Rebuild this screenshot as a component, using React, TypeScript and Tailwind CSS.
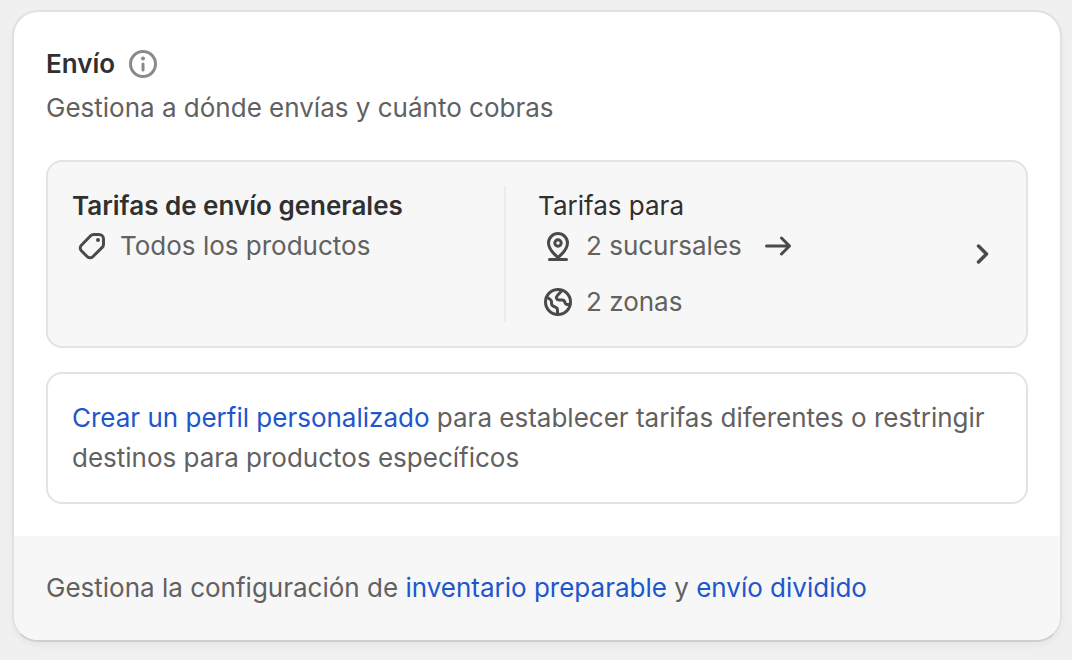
import type { ReactNode } from "react";

function Icon({ children, className = "" }: { children: ReactNode; className?: string }) {
  return (
    <svg
      viewBox="0 0 20 20"
      className={`size-10 shrink-0 ${className}`}
      fill="none"
      stroke="currentColor"
      strokeWidth="1.5"
      strokeLinecap="round"
      strokeLinejoin="round"
      aria-hidden="true"
    >
      {children}
    </svg>
  );
}

function InfoIcon() {
  return (
    <Icon>
      <circle cx="10" cy="10" r="6.25" />
      <path d="M10 10v3" />
      <circle cx="10" cy="7.25" r="1" fill="currentColor" stroke="none" />
    </Icon>
  );
}

function TagIcon() {
  return (
    <Icon className="text-[#4a4a4a]">
      <path d="M10.9 4.25h2.6a2.25 2.25 0 0 1 2.25 2.25v2.6c0 .6-.24 1.17-.66 1.6l-4.7 4.65a1.9 1.9 0 0 1-2.7 0l-3-3a1.9 1.9 0 0 1 0-2.7l4.62-4.74c.42-.42 1-.66 1.6-.66z" />
      <circle cx="13" cy="7" r="1" fill="currentColor" stroke="none" />
    </Icon>
  );
}

function PinIcon() {
  return (
    <Icon className="text-[#4a4a4a]">
      <path d="M10 15.75c-1.6-1.3-4.75-3.9-4.75-7.2a4.75 4.75 0 0 1 9.5 0c0 3.3-3.15 5.9-4.75 7.2z" />
      <circle cx="10" cy="8.5" r="1.6" />
      <path d="M5.75 16.75h8.5" />
    </Icon>
  );
}

function GlobeIcon() {
  return (
    <Icon className="text-[#4a4a4a]">
      <circle cx="10" cy="10" r="6.25" />
      <path d="M4.3 7.5l1.7 1.1c.5.3.75.8.75 1.3v.8c0 .6.35 1.1.9 1.4l1.3.6c.5.25.8.7.8 1.2v2.2" />
      <path d="M12 4.3l-2.3 2.5c-.9 1-.5 2.2.8 2.2h1.5c.7 0 1.2.4 1.4 1l.2.6c.1.4.5.65.9.65h1.4" />
    </Icon>
  );
}

function ArrowIcon() {
  return (
    <Icon>
      <path d="M4.25 10h11.5M11.75 6l4 4-4 4" />
    </Icon>
  );
}

function Link({ children }: { children: ReactNode }) {
  return (
    <a href="#" className="text-[#2056cb] hover:underline">
      {children}
    </a>
  );
}

export default function App() {
  return (
    <div className="min-h-screen bg-[#f0f0f0] pt-2.5 pr-2.5 pb-5 pl-3 font-['Inter',sans-serif] text-[26px] leading-10 text-[#616161]">
      <section className="overflow-hidden rounded-[26px] border-2 border-[#e1e1e1] border-b-[#cfcfcf] bg-white bg-clip-padding shadow-[0_4px_6px_rgba(0,0,0,0.04)]">
        <div className="p-8">
          <header className="flex flex-col gap-1">
            <div className="flex items-center gap-2">
              <h2 className="font-semibold text-[#303030]">Envío</h2>
              <button type="button" aria-label="Información sobre envío" className="text-[#8a8a8a]">
                <InfoIcon />
              </button>
            </div>
            <p>Gestiona a dónde envías y cuánto cobras</p>
          </header>

          <div className="mt-8 flex items-stretch rounded-2xl border-2 border-[#e3e3e3] bg-[#f7f7f7] p-6">
            <div className="min-w-0 flex-1">
              <h3 className="font-semibold text-[#303030]">Tarifas de envío generales</h3>
              <div className="flex items-center gap-2">
                <TagIcon />
                <span>Todos los productos</span>
              </div>
            </div>
            <div className="mr-8 w-0.5 bg-[#ebebeb]" />
            <div className="min-w-0 flex-1">
              <h3 className="text-[#303030]">Tarifas para</h3>
              <ul className="flex flex-col gap-4">
                <li className="flex items-center gap-2">
                  <PinIcon />
                  <span>2 sucursales</span>
                  <span className="ml-2 text-[#4a4a4a]">
                    <ArrowIcon />
                  </span>
                </li>
                <li className="flex items-center gap-2">
                  <GlobeIcon />
                  <span>2 zonas</span>
                </li>
              </ul>
            </div>
            <button type="button" aria-label="Ver tarifas de envío generales" className="self-center text-[#4a4a4a]">
              <svg
                viewBox="0 0 16 20"
                className="h-10 w-8"
                fill="none"
                stroke="currentColor"
                strokeWidth="1.75"
                strokeLinecap="round"
                strokeLinejoin="round"
                aria-hidden="true"
              >
                <path d="M4.25 6l4 4-4 4" />
              </svg>
            </button>
          </div>

          <p className="mt-6 rounded-2xl border-2 border-[#e3e3e3] p-6">
            <Link>Crear un perfil personalizado</Link> para establecer tarifas diferentes o restringir destinos
            para productos específicos
          </p>
        </div>

        <footer className="bg-[#f7f7f7] p-8">
          Gestiona la configuración de <Link>inventario preparable</Link> y <Link>envío dividido</Link>
        </footer>
      </section>
    </div>
  );
}
